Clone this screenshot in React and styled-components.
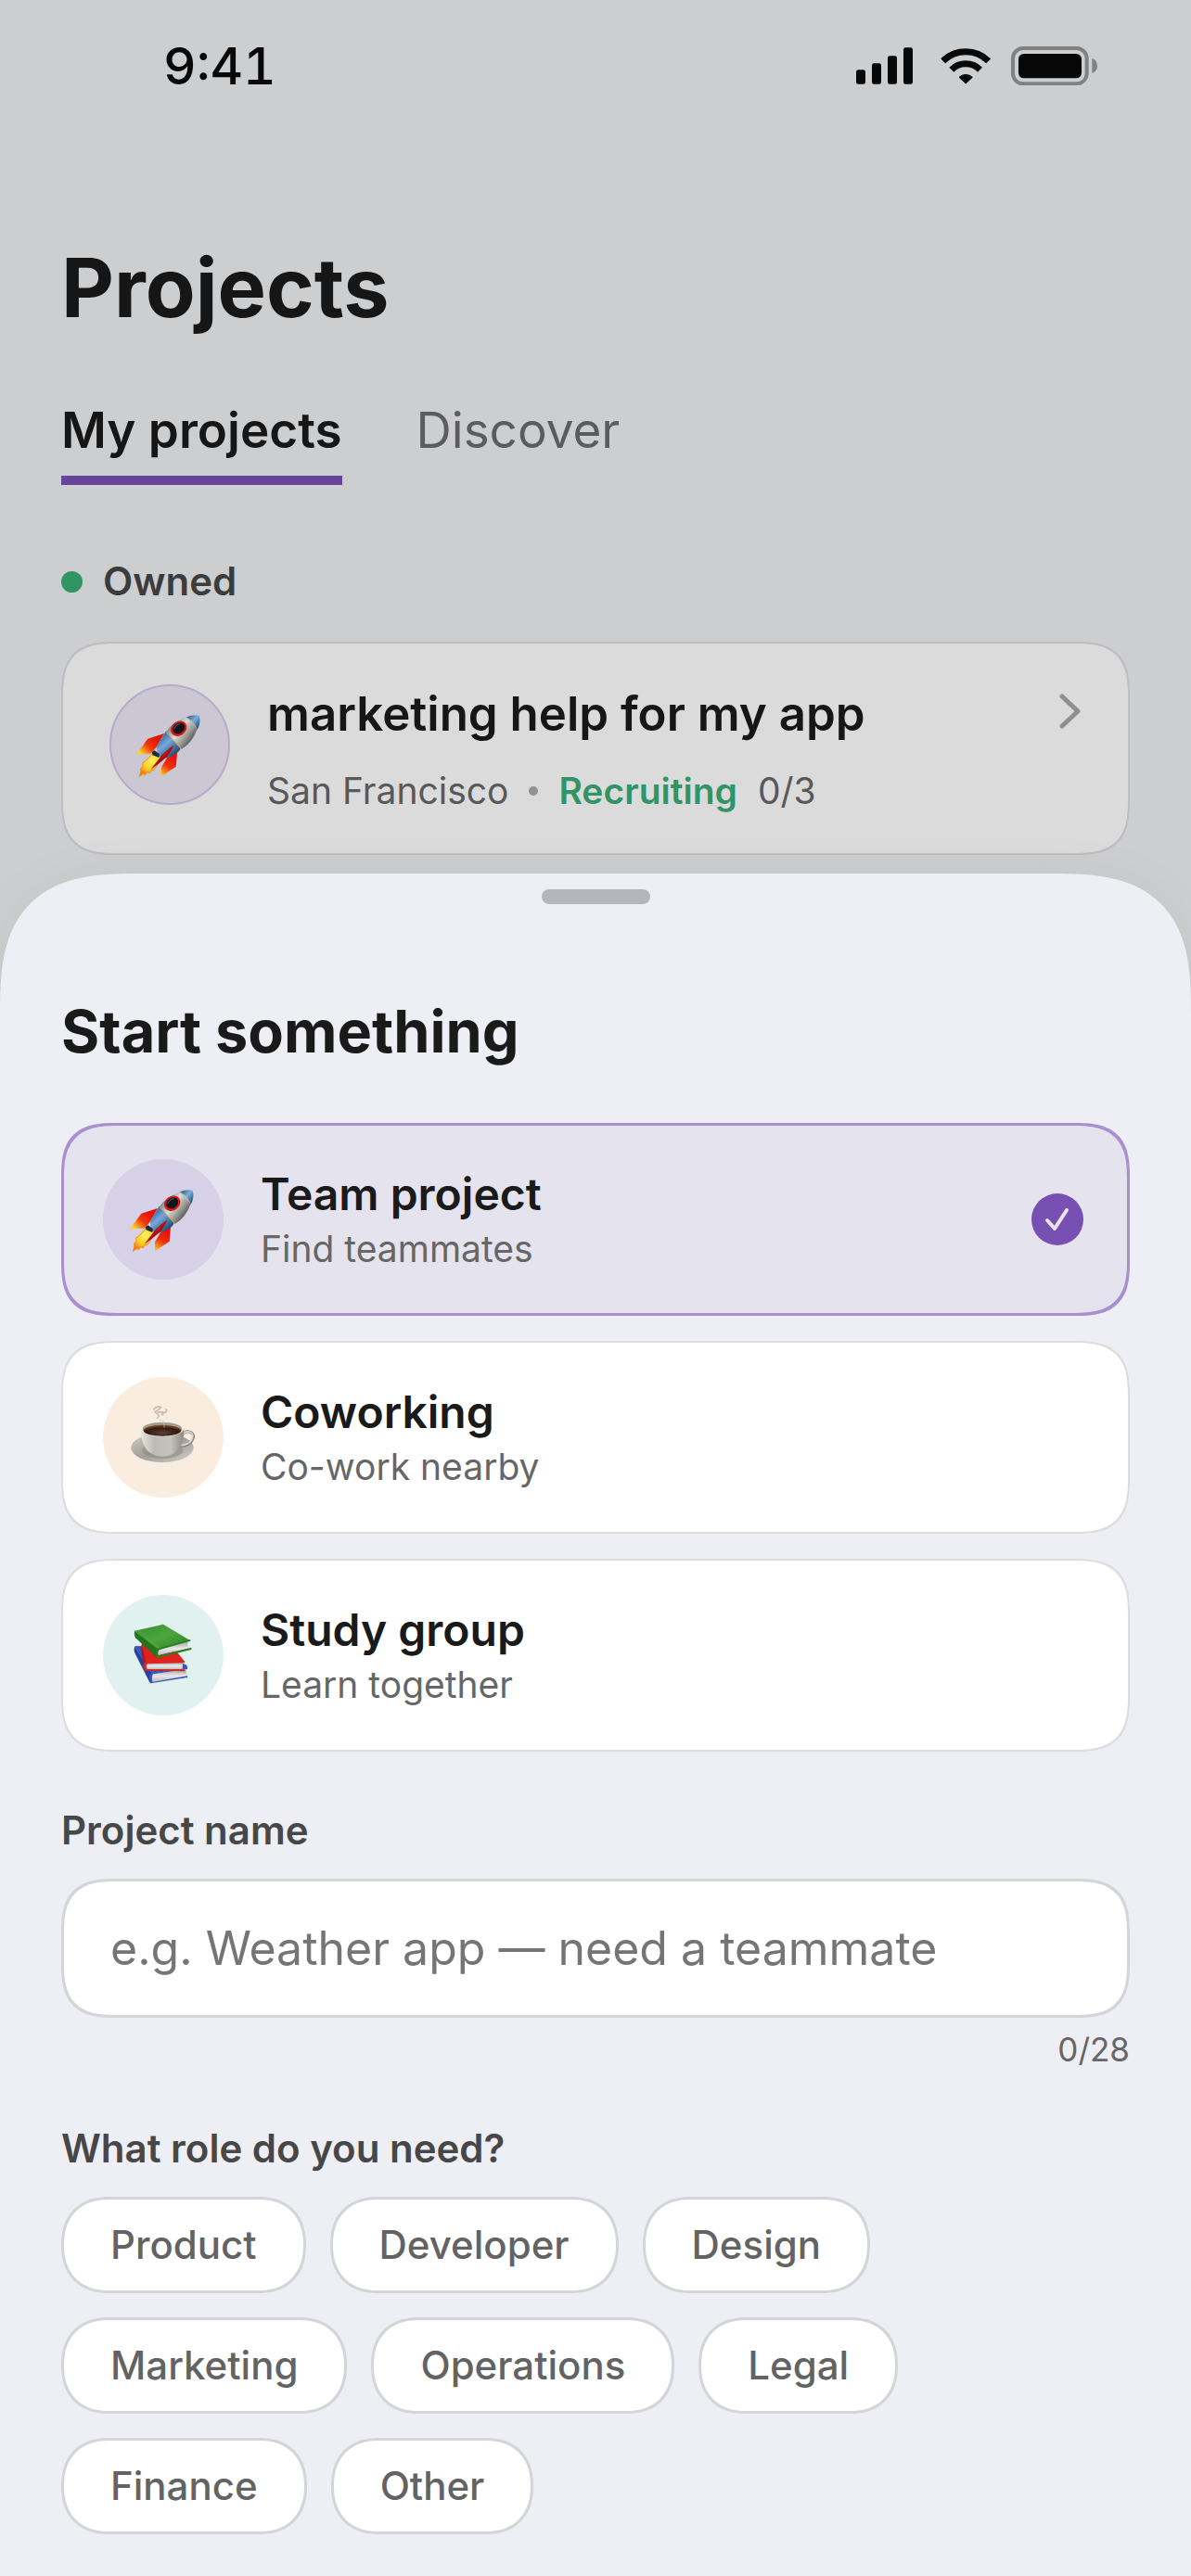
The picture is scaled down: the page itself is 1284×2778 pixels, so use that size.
import React, { useState } from 'react'
import styled, { createGlobalStyle, css } from 'styled-components'

const GlobalStyle = createGlobalStyle`
  * {
    box-sizing: border-box;
  }
  body {
    margin: 0;
    background-color: #cdced0;
    color: #161616;
    font-family: Inter, "Liberation Sans", sans-serif;
  }
  button,
  input {
    font-family: inherit;
  }
`
// continuous corners where the browser has them, plain round ones elsewhere
const cardCorners = css`
  border-radius: 46px;
  @supports (corner-shape: squircle) {
    border-radius: 60px;
    corner-shape: superellipse(1.5);
  }
`
const Screen = styled.div`
  display: flex;
  flex-direction: column;
  min-height: 100vh;
  overflow: hidden;
`
const StatusBar = styled.header`
  display: flex;
  align-items: center;
  justify-content: space-between;
  height: 142px;
  padding: 0 101px 0 176px;
`
const Time = styled.time`
  font-size: 55px;
  font-weight: 500;
  font-variant-numeric: tabular-nums;
  line-height: 64px;
  color: #080808;
`
const StatusIcons = styled.div`
  display: flex;
  align-items: center;
  gap: 22px;
`
const Page = styled.main`
  padding: 116px 66px 20px;
`
const PageTitle = styled.h1`
  margin: 0;
  font-size: 88px;
  font-weight: 700;
  line-height: 104px;
`
const Tabs = styled.nav`
  display: flex;
  gap: 80px;
  margin-top: 70px;
`
const Tab = styled.button`
  padding: 0 0 17px;
  border: 0;
  border-bottom: 10px solid ${({ $active }) => ($active ? '#67439b' : 'transparent')};
  background: none;
  color: ${({ $active }) => ($active ? '#161616' : '#5c5c5d')};
  font-size: 53px;
  font-weight: ${({ $active }) => ($active ? 600 : 400)};
  line-height: 64px;
  cursor: pointer;
`
const SectionTitle = styled.h2`
  display: flex;
  align-items: center;
  gap: 22px;
  margin: 78px 0 39px;
  color: #3c3c3d;
  font-size: 42px;
  font-weight: 600;
  line-height: 52px;
`
const Dot = styled.span`
  width: ${({ $size }) => $size}px;
  height: ${({ $size }) => $size}px;
  border-radius: 50%;
  background-color: ${({ $color }) => $color};
`
const ProjectCard = styled.a`
  display: flex;
  align-items: flex-start;
  gap: 40px;
  padding: 44px 50px 41px;
  border: 2px solid #bdbdc2;
  ${cardCorners}
  background-color: #dbdbdb;
  color: inherit;
  text-decoration: none;
`
const IconCircle = styled.span`
  display: flex;
  flex: none;
  align-items: center;
  justify-content: center;
  width: 130px;
  height: 130px;
  border: ${({ $border }) => ($border ? `2px solid ${$border}` : '0')};
  border-radius: 50%;
  background-color: ${({ $color }) => $color};
`
const ProjectBody = styled.div`
  flex: 1;
`
const ProjectName = styled.h3`
  margin: 0;
  font-size: 51px;
  font-weight: 600;
  line-height: 64px;
`
const ProjectMeta = styled.p`
  display: flex;
  align-items: center;
  gap: 22px;
  margin: 25px 0 0;
  color: #585858;
  font-size: 39px;
  line-height: 52px;
  & > b {
    color: #309465;
    font-weight: 600;
  }
`
const Sheet = styled.section`
  flex: 1;
  padding: 17px 66px 46px;
  border-radius: 108px 108px 0 0;
  background-color: #eeeff4;
  box-shadow: 0 0 60px rgba(0, 0, 0, 0.04);
  color: #1a1a1a;
  @supports (corner-shape: squircle) {
    border-radius: 150px 150px 0 0;
    corner-shape: superellipse(1.5);
  }
`
const Handle = styled.div`
  width: 117px;
  height: 16px;
  margin: 0 auto;
  border-radius: 8px;
  background-color: #b3b6bb;
`
const SheetTitle = styled.h2`
  margin: 97px 0 59px;
  font-size: 63px;
  font-weight: 700;
  line-height: 80px;
`
const Options = styled.div`
  display: flex;
  flex-direction: column;
  gap: 27px;
`
const Option = styled.label`
  display: flex;
  align-items: center;
  gap: 40px;
  padding: 39px 50px 39px 45px;
  ${cardCorners}
  border: 0;
  background-color: ${({ $selected }) => ($selected ? '#e5e3ee' : '#ffffff')};
  box-shadow: inset 0 0 0 ${({ $selected }) => ($selected ? '3px #a890d0' : '2px #dcdce1')};
  cursor: pointer;
`
const OptionText = styled.span`
  display: flex;
  flex: 1;
  flex-direction: column;
  gap: 4px;
`
const OptionTitle = styled.span`
  font-size: 48px;
  font-weight: 600;
  line-height: 60px;
`
const OptionHint = styled.span`
  color: #666667;
  font-size: 39px;
  line-height: 50px;
`
const RadioMark = styled.span`
  display: grid;
  place-items: center;
  & > * {
    grid-area: 1 / 1;
  }
`
const Radio = styled.input`
  width: 56px;
  height: 56px;
  margin: 0;
  border-radius: 50%;
  appearance: none;
  cursor: pointer;
  &:checked {
    background-color: #7850b3;
  }
`
const FieldLabel = styled.label`
  display: block;
  margin: 59px 0 26px;
  color: #474748;
  font-size: 42px;
  font-weight: 600;
  line-height: 52px;
`
const TextInput = styled.input`
  display: block;
  width: 100%;
  height: 150px;
  padding: 0 50px;
  border: 3px solid #d4d5da;
  ${cardCorners}
  background-color: #ffffff;
  color: #1a1a1a;
  font-size: 50px;
  &::placeholder {
    color: #757575;
    opacity: 1;
  }
`
const Counter = styled.p`
  margin: 12px 0 0;
  color: #666667;
  font-size: 35px;
  line-height: 44px;
  text-align: right;
`
const Chips = styled.div`
  display: flex;
  flex-wrap: wrap;
  gap: 26px;
`
const Chip = styled.button`
  padding: 23px 50px;
  border: 3px solid ${({ $active }) => ($active ? '#a890d0' : '#d4d5da')};
  border-radius: 52px;
  corner-shape: superellipse(1.2);
  background-color: ${({ $active }) => ($active ? '#e5e3ee' : '#ffffff')};
  color: #636364;
  font-size: 42px;
  font-weight: 500;
  line-height: 52px;
  cursor: pointer;
`

const SignalIcon = () => (
  <svg width="69" height="40" viewBox="132 96 207 119" fill="#080808" aria-hidden="true">
    <rect x="132" y="168" width="30" height="47" rx="7" />
    <rect x="183" y="147" width="30" height="68" rx="7" />
    <rect x="234" y="123" width="30" height="92" rx="7" />
    <rect x="285" y="96" width="30" height="119" rx="7" />
  </svg>
)

const WifiIcon = () => (
  <svg width="54" height="39" viewBox="403 92 162 117" fill="none" aria-hidden="true">
    <g stroke="#080808" strokeWidth="21">
      <path d="M411 133.500A104 104 0 0 1 558 133.500" />
      <path d="M438.500 161.500A65 65 0 0 1 530.500 161.500" />
    </g>
    <path
      d="M463 186A31 31 0 0 1 506 186L484.500 206Z"
      fill="#080808"
      stroke="#080808"
      strokeWidth="3"
      strokeLinejoin="round"
    />
  </svg>
)

const BatteryIcon = () => (
  <svg width="93" height="42" viewBox="630 90 279 126" aria-hidden="true">
    <rect x="636" y="96" width="239" height="115" rx="33" fill="none" stroke="#808183" strokeWidth="12" />
    <rect x="654" y="114" width="204" height="79" rx="17" fill="#080808" />
    <path d="M892 129Q909 135 909 153Q909 171 892 177Z" fill="#808183" />
  </svg>
)

const ChevronIcon = () => (
  <svg width="24" height="58" viewBox="0 0 24 58" fill="none" aria-hidden="true">
    <path d="M3 13L20 29L3 45" stroke="#8f8f90" strokeWidth="5" strokeLinecap="round" strokeLinejoin="round" />
  </svg>
)

const CheckIcon = () => (
  <svg width="28" height="28" viewBox="0 0 28 28" fill="none" aria-hidden="true">
    <path d="M3 15L11 24L24 4" stroke="#e9e6f2" strokeWidth="4" strokeLinecap="round" strokeLinejoin="round" />
  </svg>
)

const RocketIcon = ({ id }) => (
  <svg width="70" height="70" viewBox="144 144 210 210" overflow="visible" aria-hidden="true">
    <defs>
      <linearGradient id={`${id}-body`} x1="240" y1="190" x2="320" y2="250" gradientUnits="userSpaceOnUse">
        <stop offset="0" stopColor="#66747d" />
        <stop offset=".4" stopColor="#dcdcd8" />
        <stop offset=".7" stopColor="#979894" />
        <stop offset="1" stopColor="#3d4140" />
      </linearGradient>
      <linearGradient id={`${id}-blue`} x1="215" y1="220" x2="270" y2="285" gradientUnits="userSpaceOnUse">
        <stop offset="0" stopColor="#2f5f94" />
        <stop offset=".4" stopColor="#76a9da" />
        <stop offset="1" stopColor="#1c3f64" />
      </linearGradient>
      <linearGradient id={`${id}-tip`} x1="308" y1="160" x2="346" y2="192" gradientUnits="userSpaceOnUse">
        <stop offset="0" stopColor="#3a648e" />
        <stop offset=".45" stopColor="#7bafdd" />
        <stop offset="1" stopColor="#1b4670" />
      </linearGradient>
      <linearGradient id={`${id}-fin`} x1="205" y1="230" x2="160" y2="280" gradientUnits="userSpaceOnUse">
        <stop offset="0" stopColor="#e01408" />
        <stop offset=".5" stopColor="#f0360d" />
        <stop offset="1" stopColor="#ffd21f" />
      </linearGradient>
      <linearGradient id={`${id}-fin2`} x1="260" y1="290" x2="222" y2="345" gradientUnits="userSpaceOnUse">
        <stop offset="0" stopColor="#ee0d0b" />
        <stop offset=".5" stopColor="#e8340c" />
        <stop offset="1" stopColor="#ffbc1c" />
      </linearGradient>
      <radialGradient id={`${id}-flame`} cx="190" cy="300" r="50" gradientUnits="userSpaceOnUse">
        <stop offset="0" stopColor="#fff060" />
        <stop offset=".6" stopColor="#ffcf22" />
        <stop offset="1" stopColor="#f5790e" />
      </radialGradient>
    </defs>
    <path
      d="M194 277L180 293L168 304L160 310L163 319L154 327L156 335L151 352L162 344L170 346L176 338L184 341L190 332L198 331L217 303L222 285Z"
      fill={`url(#${id}-flame)`}
      stroke="#f08c18"
      strokeWidth="3"
    />
    <path d="M231 213L178 230L141 280L188 278L207 256Z" fill={`url(#${id}-fin)`} />
    <path d="M273 275L240 292L222 322V352L269 320Z" fill={`url(#${id}-fin2)`} />
    <path d="M237 205L278 247Q290 260 276 273Q258 289 232 293L210 287L207 255Z" fill={`url(#${id}-blue)`} />
    <path d="M237 209Q254 178 304 160L338 199Q321 244 287 264Z" fill={`url(#${id}-body)`} />
    <path d="M237 209L287 264" stroke="#c5a348" strokeWidth="3" />
    <path d="M303 160Q326 150 344 156Q351 178 338 201Q330 176 303 160Z" fill={`url(#${id}-tip)`} />
    <path d="M302 161Q327 175 337 200" fill="none" stroke="#a99b6e" strokeWidth="2" />
    <ellipse cx="278" cy="197" rx="28" ry="23" transform="rotate(-35 278 197)" fill="#dc171b" />
    <ellipse cx="278" cy="196" rx="21" ry="17" transform="rotate(-35 278 196)" fill="#111719" />
    <path d="M263 199Q268 184 283 182" fill="none" stroke="#53656a" strokeWidth="3" />
    <path d="M200 268L215 279L214 291L193 283L192 272Z" fill="#1e2c35" />
    <path d="M262 251Q242 263 225 281L187 330Q220 306 234 293Q250 279 262 251Z" fill="#a30d0e" />
    <path d="M262 251L232 279L218 298Z" fill="#ee1c14" />
  </svg>
)

const CoffeeIcon = () => (
  <svg width="70" height="70" viewBox="155 164 210 210" overflow="visible" aria-hidden="true">
    <defs>
      <linearGradient id="saucer" x1="0" y1="0" x2="1" y2="1">
        <stop offset="0" stopColor="#d0cec7" />
        <stop offset=".5" stopColor="#a09e96" />
        <stop offset="1" stopColor="#d2d0c9" />
      </linearGradient>
      <linearGradient id="cup" x1="0" y1="0" x2="1" y2="0">
        <stop offset="0" stopColor="#e9e7e2" />
        <stop offset=".3" stopColor="#bfbcb5" />
        <stop offset=".7" stopColor="#c5c2bb" />
        <stop offset="1" stopColor="#8c8981" />
      </linearGradient>
      <radialGradient id="coffee" cx=".5" cy=".7" r=".6">
        <stop offset="0" stopColor="#5c4034" />
        <stop offset=".7" stopColor="#301b10" />
        <stop offset="1" stopColor="#704017" />
      </radialGradient>
    </defs>
    <ellipse cx="257" cy="307" rx="102" ry="48" fill="#efede8" />
    <ellipse cx="257" cy="303" rx="101" ry="47" fill="url(#saucer)" />
    <ellipse cx="258" cy="311" rx="66" ry="27" fill="#8d8a82" opacity=".6" />
    <path d="M320 264Q331 246 348 252Q365 262 353 280Q342 297 317 297" fill="none" stroke="#85827b" strokeWidth="9" />
    <path d="M321 262Q332 246 347 252Q362 261 351 279Q341 294 318 295" fill="none" stroke="#ddd9d1" strokeWidth="5" />
    <path d="M187 240C187 288 204 331 258 331C309 331 327 288 327 240Z" fill="url(#cup)" />
    <ellipse cx="257" cy="240" rx="70" ry="27" fill="#f1efeb" />
    <ellipse cx="257" cy="242" rx="64" ry="22" fill="#a39b8e" />
    <ellipse cx="257" cy="247" rx="61" ry="18" fill="url(#coffee)" />
    <path
      d="M228 180Q242 164 253 172Q244 181 231 188M239 208Q252 201 238 190Q252 184 263 190Q275 184 268 177M253 185Q265 201 254 194"
      fill="none"
      stroke="#aaa39c"
      strokeWidth="5"
      opacity=".65"
    />
    <path d="M245 214Q265 207 263 238M270 201L275 208" fill="none" stroke="#d5cdc5" strokeWidth="4" opacity=".5" />
  </svg>
)

const BooksIcon = () => (
  <svg width="70" height="70" viewBox="155 181 210 210" overflow="visible" aria-hidden="true">
    <defs>
      <linearGradient id="green-cover" x1="0" y1="0" x2="1" y2="1">
        <stop offset="0" stopColor="#36912d" />
        <stop offset=".5" stopColor="#4ea53f" />
        <stop offset="1" stopColor="#267c20" />
      </linearGradient>
      <linearGradient id="pages" x1="0" y1="0" x2="0" y2="1">
        <stop offset="0" stopColor="#a29fa2" />
        <stop offset=".5" stopColor="#ebe8ea" />
        <stop offset="1" stopColor="#bcb9bc" />
      </linearGradient>
    </defs>
    <path d="M168 256L194 257L336 318L339 328L220 346Z" fill="#3158bc" />
    <path d="M168 257Q163 270 169 281L216 374L223 377L222 345Z" fill="#2641a0" />
    <path d="M220 346L334 333L335 354L222 372Z" fill="url(#pages)" />
    <path d="M219 345L338 326V331L227 347Q220 360 226 372L338 353V358L220 377Q211 362 219 345Z" fill="#3157b9" />
    <path d="M190 249L292 260L330 308L203 311Z" fill="#dd231d" />
    <path d="M190 249Q187 268 193 297L201 335L205 309Z" fill="#b21719" />
    <path d="M202 311L323 308L322 331L204 333Z" fill="url(#pages)" />
    <path d="M199 309L329 305V311L209 314Q202 323 209 331L330 332V338L200 336Q191 321 199 309Z" fill="#d52821" />
    <path d="M168 207L260 186L348 239L241 269Z" fill="url(#green-cover)" />
    <path d="M168 207Q164 219 170 230L238 292L244 294L241 266Z" fill="#25741d" />
    <path d="M179 208L247 263" stroke="#62ad51" strokeWidth="2" />
    <path d="M241 269L338 242L341 264L241 287Z" fill="url(#pages)" />
    <path d="M239 265L348 235V240L247 269Q240 278 245 287L351 261V268L240 295Q232 280 239 265Z" fill="#287e21" />
  </svg>
)

const options = [
  { value: 'team', title: 'Team project', hint: 'Find teammates', color: '#d6d1e7', icon: <RocketIcon id="team-rocket" /> },
  { value: 'coworking', title: 'Coworking', hint: 'Co-work nearby', color: '#faede0', icon: <CoffeeIcon /> },
  { value: 'study', title: 'Study group', hint: 'Learn together', color: '#e1f1ef', icon: <BooksIcon /> },
]

const roles = ['Product', 'Developer', 'Design', 'Marketing', 'Operations', 'Legal', 'Finance', 'Other']

const App = () => {
  const [tab, setTab] = useState('My projects')
  const [kind, setKind] = useState('team')
  const [name, setName] = useState('')
  const [role, setRole] = useState(null)

  return (
    <Screen>
      <GlobalStyle />
      <StatusBar>
        <Time>9:41</Time>
        <StatusIcons>
          <SignalIcon />
          <WifiIcon />
          <BatteryIcon />
        </StatusIcons>
      </StatusBar>
      <Page>
        <PageTitle>Projects</PageTitle>
        <Tabs>
          {['My projects', 'Discover'].map((el) => (
            <Tab key={el} type="button" $active={tab === el} onClick={() => setTab(el)}>
              {el}
            </Tab>
          ))}
        </Tabs>
        <SectionTitle>
          <Dot $size={23} $color="#309465" />
          Owned
        </SectionTitle>
        <ProjectCard href="#project">
          <IconCircle $color="#cbc7d3" $border="#b6abc9">
            <RocketIcon id="owned-rocket" />
          </IconCircle>
          <ProjectBody>
            <ProjectName>marketing help for my app</ProjectName>
            <ProjectMeta>
              <span>San Francisco</span>
              <Dot $size={10} $color="#929292" />
              <b>Recruiting</b>
              <span>0/3</span>
            </ProjectMeta>
          </ProjectBody>
          <ChevronIcon />
        </ProjectCard>
      </Page>
      <Sheet>
        <Handle />
        <SheetTitle>Start something</SheetTitle>
        <Options role="radiogroup" aria-label="Start something">
          {options.map((el) => (
            <Option key={el.value} $selected={kind === el.value}>
              <IconCircle $color={el.color}>{el.icon}</IconCircle>
              <OptionText>
                <OptionTitle>{el.title}</OptionTitle>
                <OptionHint>{el.hint}</OptionHint>
              </OptionText>
              <RadioMark>
                <Radio
                  type="radio"
                  name="kind"
                  value={el.value}
                  checked={kind === el.value}
                  onChange={() => setKind(el.value)}
                />
                {kind === el.value && <CheckIcon />}
              </RadioMark>
            </Option>
          ))}
        </Options>
        <FieldLabel htmlFor="project-name">Project name</FieldLabel>
        <TextInput
          id="project-name"
          type="text"
          maxLength={28}
          placeholder="e.g. Weather app — need a teammate"
          value={name}
          onChange={(e) => setName(e.target.value)}
        />
        <Counter>{name.length}/28</Counter>
        <FieldLabel as="h3" id="role-label">
          What role do you need?
        </FieldLabel>
        <Chips role="group" aria-labelledby="role-label">
          {roles.map((el) => (
            <Chip
              key={el}
              type="button"
              aria-pressed={role === el}
              $active={role === el}
              onClick={() => setRole(role === el ? null : el)}
            >
              {el}
            </Chip>
          ))}
        </Chips>
      </Sheet>
    </Screen>
  )
}

export default App
